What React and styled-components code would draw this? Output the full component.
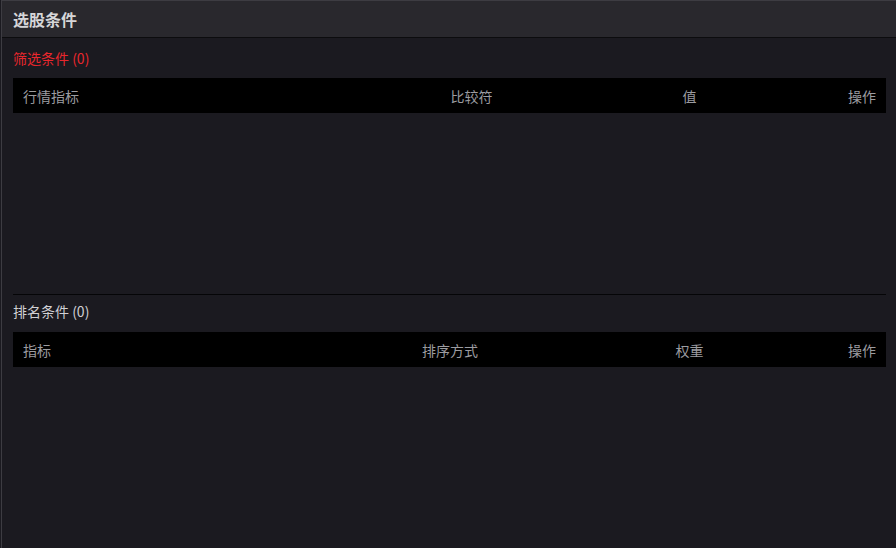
import React from 'react';
import styled, { createGlobalStyle } from 'styled-components';

const GlobalStyle = createGlobalStyle`
  html, body {
    margin: 0;
    padding: 0;
    background: #1b1a20;
    font-family: "Noto Sans CJK SC", "Liberation Sans", sans-serif;
  }
`;

const Panel = styled.div`
  margin-left: 1px;
  height: 548px;
  box-sizing: border-box;
  border-left: 1px solid #3d3c42;
  border-top: 1px solid #3d3c42;
  background: #1b1a20;
  display: flex;
  flex-direction: column;
`;

const Header = styled.div`
  height: 36px;
  display: flex;
  align-items: center;
  padding-left: 11px;
  background: #29282d;
  border-bottom: 1px solid #0c0c0e;
  color: #d6d6d8;
  font-size: 16px;
  font-weight: 700;
`;

const Body = styled.div`
  padding: 0 10px 0 11px;
  display: flex;
  flex-direction: column;
`;

const Section = styled.div`
  display: flex;
  flex-direction: column;
  height: ${(p) => p.height}px;
`;

const SectionTitle = styled.div`
  height: ${(p) => p.size}px;
  box-sizing: border-box;
  padding-bottom: ${(p) => p.lift}px;
  display: flex;
  align-items: center;
  font-size: 14px;
  color: ${(p) => (p.active ? '#e8272d' : '#d0d0d4')};
`;

const TableHead = styled.div`
  display: grid;
  grid-template-columns: ${(p) => p.columns};
  align-items: center;
  height: 35px;
  padding: 0 10px;
  background: #000;
  color: #9c9ca0;
  font-size: 14px;
`;

const Cell = styled.div`
  text-align: ${(p) => p.align || 'left'};
`;

const Divider = styled.div`
  height: 1px;
  background: #050507;
`;

const tables = [
  {
    title: '筛选条件 (0)',
    active: true,
    height: 256,
    titleSize: 40,
    lift: 0,
    columns: '317px 263px 173px 100px',
    heads: ['行情指标', '比较符', '值', '操作'],
  },
  {
    title: '排名条件 (0)',
    active: false,
    height: 240,
    titleSize: 37,
    lift: 5,
    columns: '274px 306px 173px 100px',
    heads: ['指标', '排序方式', '权重', '操作'],
  },
];

const aligns = ['left', 'center', 'center', 'right'];

export default function App() {
  return (
    <>
      <GlobalStyle />
      <Panel>
        <Header>选股条件</Header>
        <Body>
          {tables.map((t, i) => (
            <React.Fragment key={t.title}>
              {i > 0 && <Divider />}
              <Section height={t.height}>
                <SectionTitle active={t.active} size={t.titleSize} lift={t.lift}>
                  {t.title}
                </SectionTitle>
                <TableHead columns={t.columns}>
                  {t.heads.map((h, j) => (
                    <Cell key={h} align={aligns[j]}>
                      {h}
                    </Cell>
                  ))}
                </TableHead>
              </Section>
            </React.Fragment>
          ))}
        </Body>
      </Panel>
    </>
  );
}
